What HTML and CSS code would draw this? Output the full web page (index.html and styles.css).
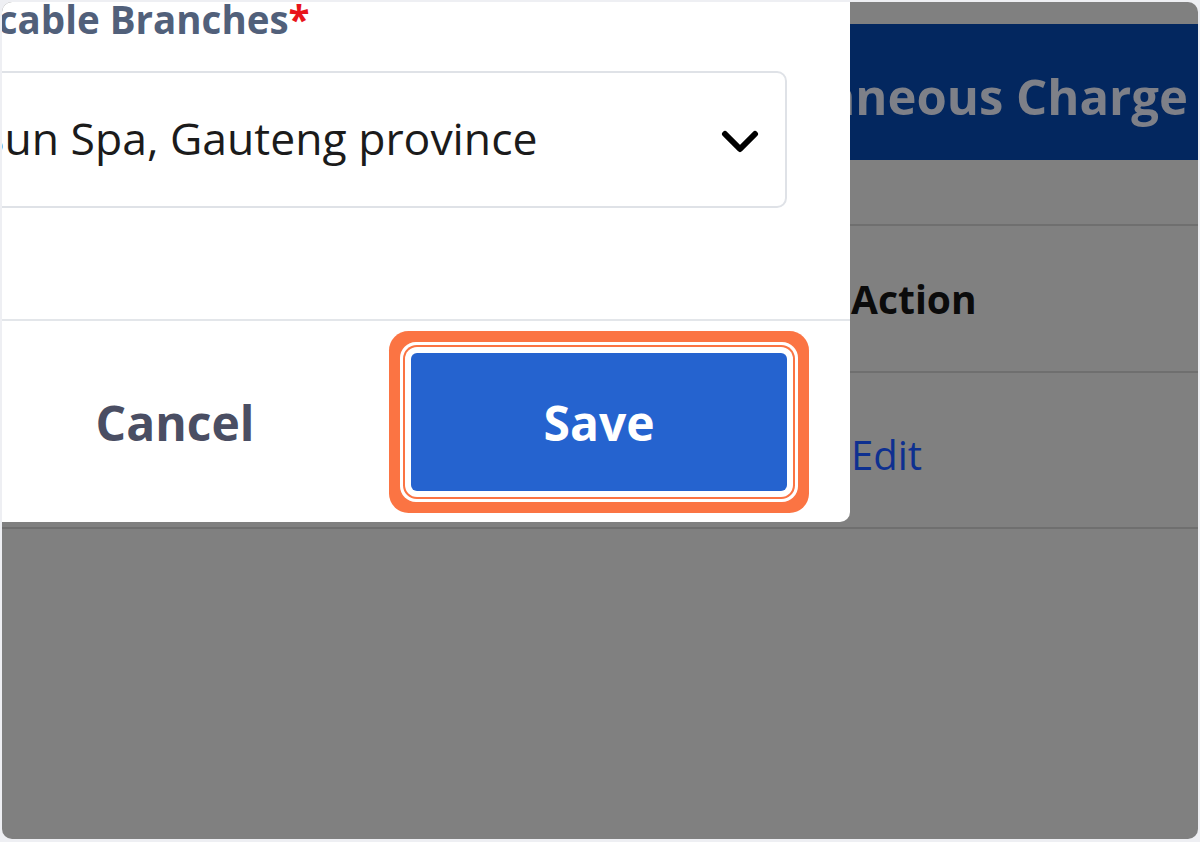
FILE: index.html
```html
<!DOCTYPE html>
<html lang="en">
<head>
<meta charset="utf-8">
<title>Miscellaneous Charge</title>
<link rel="stylesheet" href="styles.css">
</head>
<body>
<div class="frame">
  <div class="page">
    <div class="page-header">Miscellaneous Charge</div>
    <div class="table">
      <div class="row row-head">
        <div class="cell"></div>
        <div class="cell cell-action">Action</div>
      </div>
      <div class="row row-body">
        <div class="cell"></div>
        <div class="cell"><a class="edit-link" href="#">Edit</a></div>
      </div>
    </div>
  </div>

  <div class="modal">
    <div class="modal-body">
      <label class="field-label">Applicable Branches<span class="req">*</span></label>
      <div class="select">
        <span class="select-value">Sun Spa, Gauteng province</span>
        <svg class="chevron" width="40" height="24" viewBox="0 0 40 24"><polyline points="5,4 20,19 35,4" fill="none" stroke="#000" stroke-width="6" stroke-linecap="round" stroke-linejoin="round"/></svg>
      </div>
    </div>
    <div class="modal-footer">
      <button class="btn btn-cancel" type="button">Cancel</button>
      <button class="btn btn-save" type="button">Save</button>
    </div>
  </div>
</div>
</body>
</html>
```

FILE: styles.css
```css
* { box-sizing: border-box; }

html, body {
  margin: 0;
  padding: 0;
  background: #eeeff3;
  font-family: "Open Sans", "Noto Sans", sans-serif;
}

.frame {
  position: relative;
  margin: 2px 2px 3px 2px;
  height: 837px;
  border-radius: 10px;
  overflow: hidden;
  background: #808080;
}

/* underlying page (dimmed) */
.page {
  padding-top: 22px;
}

.page-header {
  height: 136px;
  background: #03275f;
  color: #7e8088;
  font-weight: 700;
  font-size: 49px;
  display: flex;
  align-items: center;
  justify-content: flex-end;
  padding: 8px 10px 0 0;
  white-space: nowrap;
}

.table {
  margin-top: 64px;
  border-top: 2px solid #6f6f6f;
}

.row {
  display: grid;
  grid-template-columns: 849px 1fr;
  border-bottom: 2px solid #6f6f6f;
}

.row-head { height: 147px; }
.row-body { height: 156px; }

.cell {
  display: flex;
  align-items: center;
}

.cell-action {
  font-weight: 700;
  font-size: 39px;
  color: #0b0b0b;
}

.edit-link {
  font-size: 40px;
  color: #0e3090;
  text-decoration: none;
  padding-top: 8px;
}

/* modal dialog over the page */
.modal {
  position: absolute;
  top: -40px;
  left: -160px;
  width: 1008px;
  background: #fff;
  border-radius: 10px;
  display: flex;
  flex-direction: column;
}

.modal-body {
  padding: 32px 63px 111px 57px;
  border-bottom: 2px solid #e3e6ea;
}

.field-label {
  display: block;
  height: 50px;
  line-height: 50px;
  margin-bottom: 27px;
  font-weight: 700;
  font-size: 38.5px;
  color: #51607a;
  white-space: nowrap;
}

.req { color: #e8141b; }

.select {
  height: 137px;
  border: 2px solid #dfe2e7;
  border-radius: 10px;
  display: flex;
  align-items: center;
  justify-content: space-between;
  padding: 0 25px 0 79px;
}

.select-value {
  font-size: 44.5px;
  color: #1b1b1b;
  white-space: nowrap;
  padding-bottom: 4px;
}

.chevron { display: block; margin-top: 4px; }

.modal-footer {
  display: flex;
  justify-content: flex-end;
  gap: 48px;
  padding: 32px 63px 31px 63px;
}

.btn {
  width: 376px;
  height: 138px;
  border: 0;
  border-radius: 6px;
  font-family: inherit;
  font-weight: 700;
  font-size: 48px;
  cursor: pointer;
}

.btn-cancel {
  background: #fff;
  color: #4a4e63;
}

.btn-save {
  background: #2563cf;
  color: #fff;
  box-shadow: 0 0 0 6px #fff, 0 0 0 8px #fb7443, 0 0 0 11px #fff, 0 0 0 22px #fb7443;
}
```
